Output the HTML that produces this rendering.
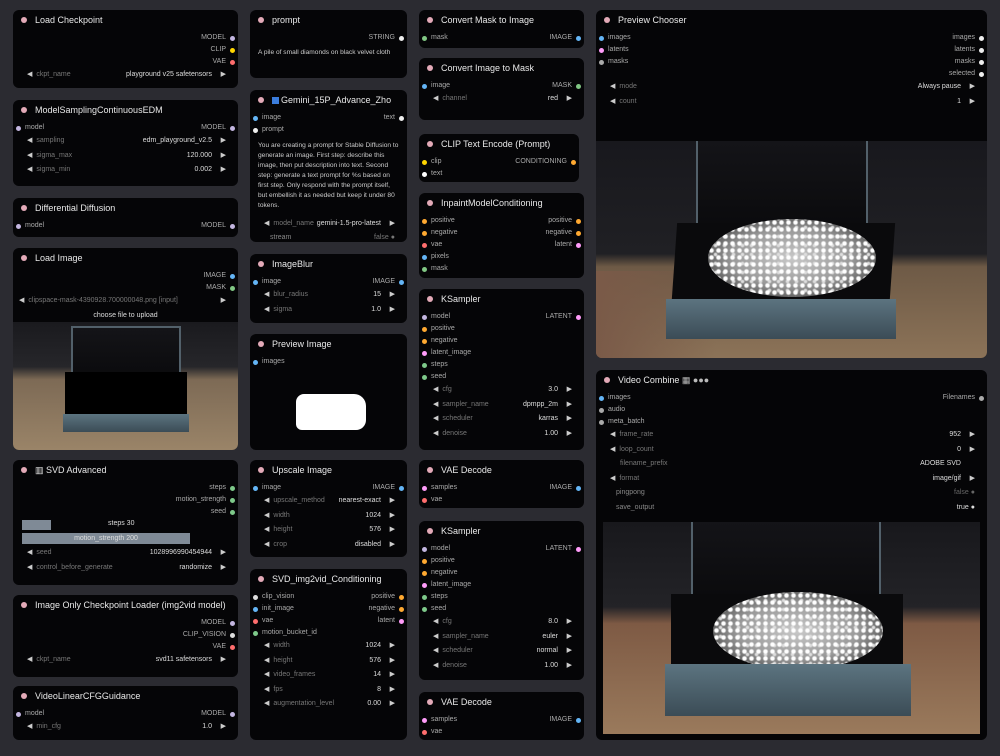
<!DOCTYPE html>
<html><head><meta charset="utf-8"><style>
*{margin:0;padding:0;box-sizing:border-box}
body{width:1000px;height:756px;background:#2b2b31;font-family:"Liberation Sans",sans-serif;position:relative;overflow:hidden;color:#ccc}
.n{position:absolute;background:#050507;border-radius:6px;overflow:hidden}
.t{height:22px;line-height:21px;font-size:9px;color:#e8e8e8;padding-left:22px;position:relative}
.t:before{content:"";position:absolute;left:8px;top:7px;width:6px;height:6px;border-radius:50%;background:#e3aab8}
.r{height:12px;line-height:12px;font-size:7px;color:#aaa;position:relative;padding-left:12px}
.r i{position:absolute;left:3px;top:3.5px;width:5px;height:5px;border-radius:50%}
.r .o{position:absolute;right:12px;top:0;color:#aaa}
.r .o i{left:auto;right:-9px}
.w{height:14.5px;line-height:14.5px;font-size:7px;color:#777;position:relative;padding-left:14px}
.w:before{content:"◀";color:#ccc;font-size:7px;margin-right:4px}
.w b{position:absolute;right:26px;font-weight:normal;color:#ddd}
.w:after{content:"▶";position:absolute;right:12px;color:#ccc}
.w.nw:before,.w.nw:after{content:""}
.p{font-size:6.6px;line-height:10px;color:#ccc;padding:4px 8px}
.scene{position:absolute;overflow:hidden;background:linear-gradient(#18181d 0,#202024 52%,#6e5a46 58%,#8c7358 100%)}
.case{position:absolute;background:#0b0b0e}
.lid{position:absolute;background:linear-gradient(#141418,#09090b);border:2px solid #52606a}
.front{position:absolute;background:linear-gradient(#5c7480,#3b4c56)}
.dia{position:absolute;border-radius:50%;background:radial-gradient(circle,#fff 0 1.5px,rgba(255,255,255,0) 3px) 0 0/7px 7px,radial-gradient(circle,#ddd 0 1px,rgba(0,0,0,0) 2.5px) 3px 4px/9px 9px,radial-gradient(ellipse,#c8c8c8 0,#9a9a9a 50%,#5a5a5a 75%,#222 100%)}
</style></head><body>

<!-- Column 1 -->
<div class="n" style="left:13px;top:10px;width:225px;height:78px">
<div class="t">Load Checkpoint</div>
<div class="r"><span class="o">MODEL<i style="background:#c3b6e0"></i></span></div>
<div class="r"><span class="o">CLIP<i style="background:#ffd500"></i></span></div>
<div class="r"><span class="o">VAE<i style="background:#ff6e6e"></i></span></div>
<div class="w">ckpt_name<b>playground v25 safetensors</b></div>
</div>
<div class="n" style="left:13px;top:100px;width:225px;height:86px">
<div class="t">ModelSamplingContinuousEDM</div>
<div class="r"><i style="background:#c3b6e0"></i>model<span class="o">MODEL<i style="background:#c3b6e0"></i></span></div>
<div class="w">sampling<b>edm_playground_v2.5</b></div>
<div class="w">sigma_max<b>120.000</b></div>
<div class="w">sigma_min<b>0.002</b></div>
</div>
<div class="n" style="left:13px;top:198px;width:225px;height:39px">
<div class="t">Differential Diffusion</div>
<div class="r"><i style="background:#c3b6e0"></i>model<span class="o">MODEL<i style="background:#c3b6e0"></i></span></div>
</div>
<div class="n" style="left:13px;top:248px;width:225px;height:202px">
<div class="t">Load Image</div>
<div class="r"><span class="o">IMAGE<i style="background:#64b5f6"></i></span></div>
<div class="r"><span class="o">MASK<i style="background:#81c784"></i></span></div>
<div class="w" style="padding-left:6px">clipspace-mask-4390928.700000048.png [input]<b></b></div>
<div style="font-size:7px;color:#ddd;text-align:center;height:14px;line-height:14px">choose file to upload</div>
<div class="scene" style="left:0;top:74px;width:225px;height:128px;background:linear-gradient(#1a1a1e 0,#26262a 35%,#7d6a55 45%,#9a8468 100%)">
<div class="lid" style="left:58px;top:4px;width:110px;height:62px"></div>
<div class="case" style="left:52px;top:50px;width:122px;height:48px;background:#000"></div>
<div class="front" style="left:50px;top:92px;width:126px;height:18px"></div>
</div>
</div>
<div class="n" style="left:13px;top:460px;width:225px;height:125px">
<div class="t">▥ SVD Advanced</div>
<div class="r"><span class="o">steps<i style="background:#7ec98a"></i></span></div>
<div class="r"><span class="o">motion_strength<i style="background:#7ec98a"></i></span></div>
<div class="r"><span class="o">seed<i style="background:#7ec98a"></i></span></div>
<div style="position:relative;height:14px;font-size:7px;color:#ddd"><div style="position:absolute;left:9px;top:2px;width:29px;height:10px;background:#7f8a96"></div><span style="position:absolute;left:95px;top:2px">steps 30</span></div>
<div style="position:relative;height:14px;font-size:7px;color:#ddd"><div style="position:absolute;left:9px;top:1px;width:168px;height:11px;background:#7f8a96;text-align:center;line-height:11px">motion_strength 200</div></div>
<div class="w">seed<b>1028996990454944</b></div>
<div class="w">control_before_generate<b>randomize</b></div>
</div>
<div class="n" style="left:13px;top:595px;width:225px;height:82px">
<div class="t">Image Only Checkpoint Loader (img2vid model)</div>
<div class="r"><span class="o">MODEL<i style="background:#c3b6e0"></i></span></div>
<div class="r"><span class="o">CLIP_VISION<i style="background:#ddd"></i></span></div>
<div class="r"><span class="o">VAE<i style="background:#ff6e6e"></i></span></div>
<div class="w">ckpt_name<b>svd11 safetensors</b></div>
</div>
<div class="n" style="left:13px;top:686px;width:225px;height:54px">
<div class="t">VideoLinearCFGGuidance</div>
<div class="r"><i style="background:#c3b6e0"></i>model<span class="o">MODEL<i style="background:#c3b6e0"></i></span></div>
<div class="w">min_cfg<b>1.0</b></div>
</div>

<!-- Column 2 -->
<div class="n" style="left:250px;top:10px;width:157px;height:68px">
<div class="t">prompt</div>
<div class="r"><span class="o">STRING<i style="background:#eee"></i></span></div>
<div class="p">A pile of small diamonds on black velvet cloth</div>
</div>
<div class="n" style="left:250px;top:90px;width:157px;height:152px">
<div class="t"><span style="display:inline-block;width:7px;height:7px;background:#3b7ddd;margin-right:2px;vertical-align:-1px"></span>Gemini_15P_Advance_Zho</div>
<div class="r"><i style="background:#64b5f6"></i>image<span class="o">text<i style="background:#eee"></i></span></div>
<div class="r"><i style="background:#eee"></i>prompt</div>
<div class="p" style="padding-top:5px">You are creating a prompt for Stable Diffusion to generate an image. First step: describe this image, then put description into text. Second step: generate a text prompt for %s based on first step. Only respond with the prompt itself, but embellish it as needed but keep it under 80 tokens.</div>
<div class="w" style="margin-top:2px">model_name<b>gemini-1.5-pro-latest</b></div>
<div class="r" style="padding-left:20px;color:#888">stream<span class="o" style="color:#777">false ●</span></div>
</div>
<div class="n" style="left:250px;top:254px;width:157px;height:69px">
<div class="t">ImageBlur</div>
<div class="r"><i style="background:#64b5f6"></i>image<span class="o">IMAGE<i style="background:#64b5f6"></i></span></div>
<div class="w">blur_radius<b>15</b></div>
<div class="w">sigma<b>1.0</b></div>
</div>
<div class="n" style="left:250px;top:334px;width:157px;height:116px">
<div class="t">Preview Image</div>
<div class="r"><i style="background:#64b5f6"></i>images</div>
<div style="position:absolute;left:46px;top:60px;width:70px;height:36px;background:#fff;border-radius:8px 12px 10px 6px"></div>
</div>
<div class="n" style="left:250px;top:460px;width:157px;height:97px">
<div class="t">Upscale Image</div>
<div class="r"><i style="background:#64b5f6"></i>image<span class="o">IMAGE<i style="background:#64b5f6"></i></span></div>
<div class="w">upscale_method<b>nearest-exact</b></div>
<div class="w">width<b>1024</b></div>
<div class="w">height<b>576</b></div>
<div class="w">crop<b>disabled</b></div>
</div>
<div class="n" style="left:250px;top:569px;width:157px;height:171px">
<div class="t">SVD_img2vid_Conditioning</div>
<div class="r"><i style="background:#ddd"></i>clip_vision<span class="o">positive<i style="background:#ffa931"></i></span></div>
<div class="r"><i style="background:#64b5f6"></i>init_image<span class="o">negative<i style="background:#ffa931"></i></span></div>
<div class="r"><i style="background:#ff6e6e"></i>vae<span class="o">latent<i style="background:#ff9cf9"></i></span></div>
<div class="r"><i style="background:#7ec98a"></i>motion_bucket_id</div>
<div class="w">width<b>1024</b></div>
<div class="w">height<b>576</b></div>
<div class="w">video_frames<b>14</b></div>
<div class="w">fps<b>8</b></div>
<div class="w">augmentation_level<b>0.00</b></div>
</div>

<!-- Column 3 -->
<div class="n" style="left:419px;top:10px;width:165px;height:38px">
<div class="t">Convert Mask to Image</div>
<div class="r"><i style="background:#81c784"></i>mask<span class="o">IMAGE<i style="background:#64b5f6"></i></span></div>
</div>
<div class="n" style="left:419px;top:58px;width:165px;height:62px">
<div class="t">Convert Image to Mask</div>
<div class="r"><i style="background:#64b5f6"></i>image<span class="o">MASK<i style="background:#81c784"></i></span></div>
<div class="w">channel<b>red</b></div>
</div>
<div class="n" style="left:419px;top:134px;width:160px;height:48px">
<div class="t">CLIP Text Encode (Prompt)</div>
<div class="r"><i style="background:#ffd500"></i>clip<span class="o">CONDITIONING<i style="background:#ffa931"></i></span></div>
<div class="r"><i style="background:#fff"></i>text</div>
</div>
<div class="n" style="left:419px;top:193px;width:165px;height:85px">
<div class="t">InpaintModelConditioning</div>
<div class="r"><i style="background:#ffa931"></i>positive<span class="o">positive<i style="background:#ffa931"></i></span></div>
<div class="r"><i style="background:#ffa931"></i>negative<span class="o">negative<i style="background:#ffa931"></i></span></div>
<div class="r"><i style="background:#ff6e6e"></i>vae<span class="o">latent<i style="background:#ff9cf9"></i></span></div>
<div class="r"><i style="background:#64b5f6"></i>pixels</div>
<div class="r"><i style="background:#81c784"></i>mask</div>
</div>
<div class="n" style="left:419px;top:289px;width:165px;height:161px">
<div class="t">KSampler</div>
<div class="r"><i style="background:#c3b6e0"></i>model<span class="o">LATENT<i style="background:#ff9cf9"></i></span></div>
<div class="r"><i style="background:#ffa931"></i>positive</div>
<div class="r"><i style="background:#ffa931"></i>negative</div>
<div class="r"><i style="background:#ff9cf9"></i>latent_image</div>
<div class="r"><i style="background:#7ec98a"></i>steps</div>
<div class="r"><i style="background:#7ec98a"></i>seed</div>
<div class="w">cfg<b>3.0</b></div>
<div class="w">sampler_name<b>dpmpp_2m</b></div>
<div class="w">scheduler<b>karras</b></div>
<div class="w">denoise<b>1.00</b></div>
</div>
<div class="n" style="left:419px;top:460px;width:165px;height:48px">
<div class="t">VAE Decode</div>
<div class="r"><i style="background:#ff9cf9"></i>samples<span class="o">IMAGE<i style="background:#64b5f6"></i></span></div>
<div class="r"><i style="background:#ff6e6e"></i>vae</div>
</div>
<div class="n" style="left:419px;top:521px;width:165px;height:159px">
<div class="t">KSampler</div>
<div class="r"><i style="background:#c3b6e0"></i>model<span class="o">LATENT<i style="background:#ff9cf9"></i></span></div>
<div class="r"><i style="background:#ffa931"></i>positive</div>
<div class="r"><i style="background:#ffa931"></i>negative</div>
<div class="r"><i style="background:#ff9cf9"></i>latent_image</div>
<div class="r"><i style="background:#7ec98a"></i>steps</div>
<div class="r"><i style="background:#7ec98a"></i>seed</div>
<div class="w">cfg<b>8.0</b></div>
<div class="w">sampler_name<b>euler</b></div>
<div class="w">scheduler<b>normal</b></div>
<div class="w">denoise<b>1.00</b></div>
</div>
<div class="n" style="left:419px;top:692px;width:165px;height:48px">
<div class="t">VAE Decode</div>
<div class="r"><i style="background:#ff9cf9"></i>samples<span class="o">IMAGE<i style="background:#64b5f6"></i></span></div>
<div class="r"><i style="background:#ff6e6e"></i>vae</div>
</div>

<!-- Column 4 -->
<div class="n" style="left:596px;top:10px;width:391px;height:348px">
<div class="t">Preview Chooser</div>
<div class="r"><i style="background:#64b5f6"></i>images<span class="o">images<i style="background:#eee"></i></span></div>
<div class="r"><i style="background:#ff9cf9"></i>latents<span class="o">latents<i style="background:#eee"></i></span></div>
<div class="r"><i style="background:#aaa"></i>masks<span class="o">masks<i style="background:#eee"></i></span></div>
<div class="r"><span class="o">selected<i style="background:#eee"></i></span></div>
<div class="w">mode<b>Always pause</b></div>
<div class="w">count<b>1</b></div>
<div class="scene" style="left:0;top:131px;width:391px;height:217px;background:linear-gradient(#18181d 0,#202024 52%,#6e5a46 58%,#8c7358 100%)">
<div style="position:absolute;left:0;top:130px;width:120px;height:90px;background:linear-gradient(90deg,#7a5a48,rgba(0,0,0,0))"></div>
<div class="lid" style="left:100px;top:0;width:172px;height:100px;border-top:none"></div>
<div class="case" style="left:78px;top:82px;width:218px;height:90px;background:#0a0a0c;transform:skewX(-4deg)"></div>
<div class="dia" style="left:112px;top:78px;width:168px;height:78px"></div>
<div class="front" style="left:70px;top:158px;width:230px;height:40px"></div>
</div>
</div>
<div class="n" style="left:596px;top:370px;width:391px;height:370px">
<div class="t">Video Combine <span style="color:#bbb">▦ ●●●</span></div>
<div class="r"><i style="background:#64b5f6"></i>images<span class="o">Filenames<i style="background:#aaa"></i></span></div>
<div class="r"><i style="background:#aaa"></i>audio</div>
<div class="r"><i style="background:#aaa"></i>meta_batch</div>
<div class="w">frame_rate<b>952</b></div>
<div class="w">loop_count<b>0</b></div>
<div class="w nw" style="padding-left:20px">filename_prefix<b style="right:26px">ADOBE SVD</b></div>
<div class="w">format<b>image/gif</b></div>
<div class="r" style="padding-left:20px;color:#888;height:14.5px;line-height:14.5px">pingpong<span class="o" style="color:#666">false ●</span></div>
<div class="r" style="padding-left:20px;color:#888;height:14.5px;line-height:14.5px">save_output<span class="o" style="color:#ddd">true ●</span></div>
<div class="scene" style="left:7px;top:152px;width:377px;height:212px;background:linear-gradient(#18181c 0,#232327 40%,#7e5a44 48%,#9a7a5c 100%)">
<div class="lid" style="left:88px;top:-2px;width:190px;height:92px;border-top:none"></div>
<div class="case" style="left:68px;top:72px;width:232px;height:90px;background:#0a0a0c"></div>
<div class="dia" style="left:110px;top:70px;width:170px;height:78px"></div>
<div class="front" style="left:62px;top:142px;width:246px;height:52px"></div>
</div>
</div>
</body></html>
